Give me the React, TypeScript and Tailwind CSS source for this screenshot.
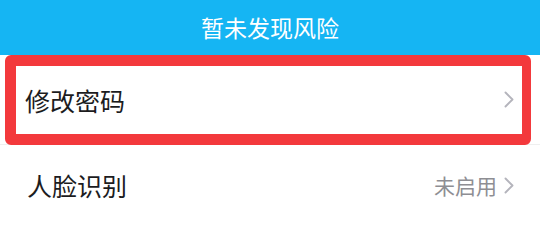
const font = { fontFamily: '"Noto Sans CJK SC", "Noto Sans", sans-serif' };

function Chevron() {
  return (
    <svg width="10" height="17" viewBox="0 0 10 17" fill="none" className="shrink-0">
      <polyline
        points="1.5,1.5 8.5,8.5 1.5,15.5"
        stroke="#b4b4bc"
        strokeWidth="1.9"
        strokeLinecap="round"
        strokeLinejoin="round"
      />
    </svg>
  );
}

export default function App() {
  return (
    <div className="w-[540px] h-[225px] bg-white overflow-hidden" style={font}>
      <div className="h-[55px] bg-[#15b5f3] flex items-center justify-center pb-[1px]">
        <span className="text-white text-[23px] leading-none">暂未发现风险</span>
      </div>

      <div className="relative h-[90px] flex items-center pl-[25px] pr-[26px] border-b border-[#efefef]">
        <span className="flex-1 text-[25px] leading-none text-[#1c1c1e] pt-[2px]">修改密码</span>
        <Chevron />
        <div className="absolute left-[5px] top-0 w-[526px] h-[90px] border-[11px] border-r-[9px] border-[#f3393c] rounded-[6px]" />
      </div>

      <div className="h-[80px] flex items-center pl-[27px] pr-[26px]">
        <span className="flex-1 text-[25px] leading-none text-[#1c1c1e]">人脸识别</span>
        <span className="text-[21px] leading-none text-[#8e8e93] mr-[7px]">未启用</span>
        <Chevron />
      </div>
    </div>
  );
}
